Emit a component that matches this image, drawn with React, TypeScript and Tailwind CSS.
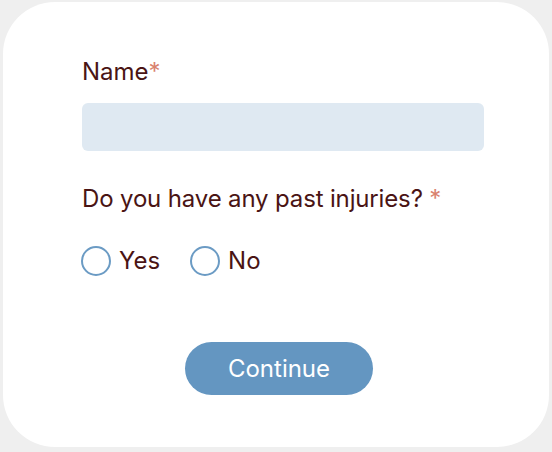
import { useState } from 'react';

export default function App() {
  const [answer, setAnswer] = useState<'yes' | 'no' | null>(null);

  return (
    <div className="w-[552px] h-[452px] bg-[#efefef] pt-[2px] pl-[3px] font-['Inter',sans-serif] text-[#4a1414]">
      <div className="w-[546px] h-[445px] rounded-[52px] bg-white pl-[79px] pt-[55px]">
        {/* Name field */}
        <label className="block text-[24px] leading-[30px]">
          Name<span className="text-[#d9826f]">*</span>
        </label>
        <input
          type="text"
          className="mt-[16px] block w-[402px] h-[48px] rounded-[6px] bg-[#dfe9f2] outline-none px-3"
        />

        {/* Injuries question */}
        <p className="mt-[33px] text-[24px] leading-[30px] tracking-[-0.15px]">
          Do you have any past injuries? <span className="text-[#d9826f]">*</span>
        </p>
        <div className="mt-[32px] -ml-px flex items-center gap-[30px]">
          <RadioOption label="Yes" checked={answer === 'yes'} onClick={() => setAnswer('yes')} />
          <RadioOption label="No" checked={answer === 'no'} onClick={() => setAnswer('no')} />
        </div>

        {/* Continue */}
        <button className="mt-[66px] ml-[103px] block w-[188px] h-[53px] rounded-full bg-[#6496c1] text-white text-[24px] leading-[30px]">
          Continue
        </button>
      </div>
    </div>
  );
}

function RadioOption({ label, checked, onClick }: { label: string; checked: boolean; onClick: () => void }) {
  return (
    <button onClick={onClick} className="flex items-center gap-[8px] text-[24px] leading-[30px]">
      <span className="w-[30px] h-[30px] rounded-full border-2 border-[#6b9bc4] flex items-center justify-center">
        {checked && <span className="w-[14px] h-[14px] rounded-full bg-[#6b9bc4]" />}
      </span>
      {label}
    </button>
  );
}
